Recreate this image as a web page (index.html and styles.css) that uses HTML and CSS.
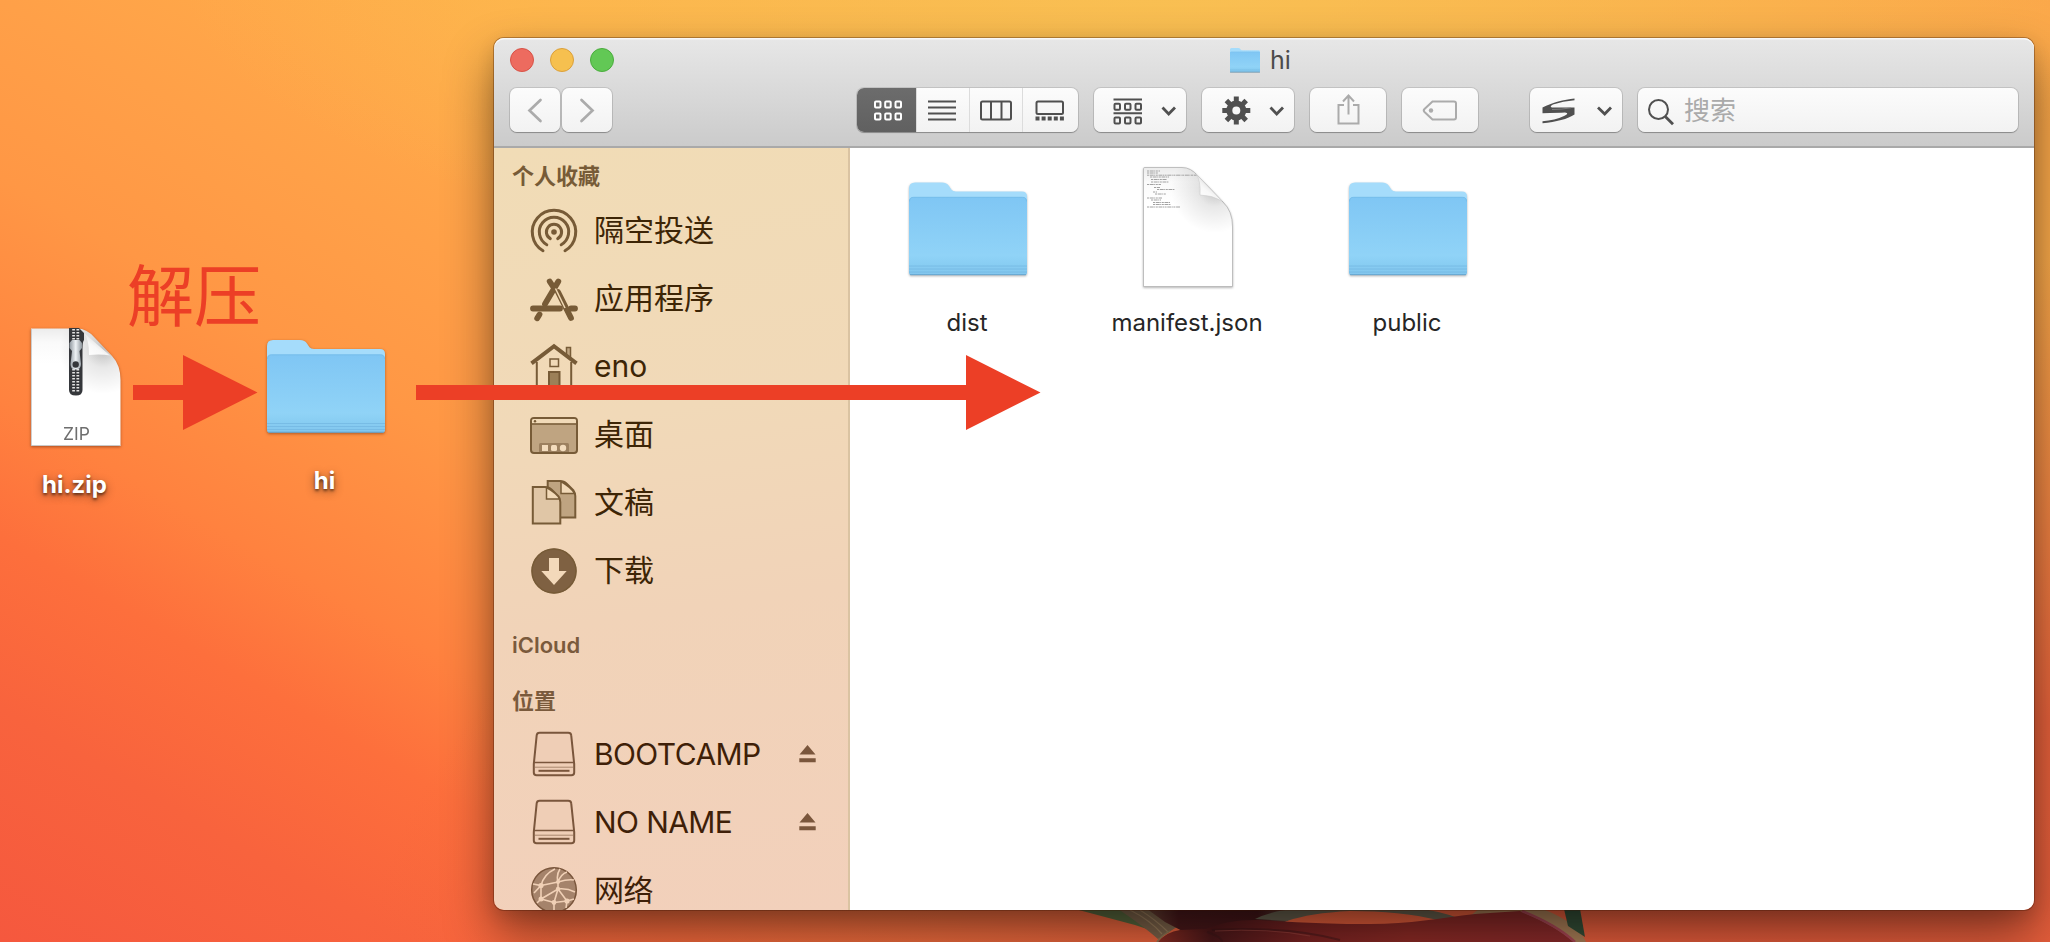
FILE: index.html
```html
<!DOCTYPE html>
<html lang="zh-CN">
<head>
<meta charset="utf-8">
<title>hi</title>
<link rel="stylesheet" href="styles.css">
</head>
<body>
<svg class="defs" width="0" height="0" aria-hidden="true">
  <defs>
    <linearGradient id="front" x1="0" y1="0" x2="0" y2="1">
      <stop offset="0" stop-color="#7fc6f4"/><stop offset=".75" stop-color="#90d3f7"/><stop offset=".87" stop-color="#88cdf2"/><stop offset="1" stop-color="#82c6ee"/>
    </linearGradient>
    <linearGradient id="paper" x1="0" y1="0" x2="0" y2="1">
      <stop offset="0" stop-color="#ececec"/><stop offset=".12" stop-color="#fafafa"/><stop offset=".3" stop-color="#fff"/>
    </linearGradient>
    <linearGradient id="curl" x1="0" y1="1" x2=".6" y2=".3">
      <stop offset="0" stop-color="#fff"/><stop offset=".6" stop-color="#f8f8f8"/><stop offset="1" stop-color="#dedede"/>
    </linearGradient>
    <radialGradient id="fold" gradientUnits="userSpaceOnUse" cx="72" cy="22" r="44">
      <stop offset="0" stop-color="#000" stop-opacity=".24"/><stop offset=".4" stop-color="#000" stop-opacity=".09"/><stop offset="1" stop-color="#000" stop-opacity="0"/>
    </radialGradient>
    <linearGradient id="pull" x1="0" y1="0" x2="1" y2="0">
      <stop offset="0" stop-color="#8e969d"/><stop offset=".5" stop-color="#eef2f5"/><stop offset="1" stop-color="#8e969d"/>
    </linearGradient>
    <linearGradient id="petal" x1="0" y1="0" x2="1" y2="0">
      <stop offset="0" stop-color="#8c2d23"/><stop offset=".13" stop-color="#4a1719"/><stop offset=".35" stop-color="#7a2322"/><stop offset=".6" stop-color="#8c2a25"/><stop offset="1" stop-color="#8a2a2b"/>
    </linearGradient>
    <linearGradient id="core" x1="0" y1="0" x2="1" y2="0">
      <stop offset="0" stop-color="#6b4436"/><stop offset=".2" stop-color="#4a191b"/><stop offset=".7" stop-color="#441618"/><stop offset="1" stop-color="#6b5245"/>
    </linearGradient>
    <symbol id="folder" viewBox="0 0 118 93">
      <path d="M0 6Q0 0 6 0H33Q38 0 40 3.500L42.500 7.200Q43.800 9 47 9H113Q118 9 118 14V60H0Z" fill="#a5dcfb"/>
      <path d="M0 19Q0 14.500 4.500 14.500H113.500Q118 14.500 118 19V90Q118 92.500 115.500 92.500H2.500Q0 92.500 0 90Z" fill="url(#front)"/>
      <path d="M.5 19Q.5 14.800 4.500 14.800H113.500Q117.500 14.800 117.500 19" fill="none" stroke="#74bbe9" stroke-width=".8"/>
      <path d="M0 83.500H118M0 86.500H118M0 89.500H118" stroke="#74b7e2" stroke-width=".8"/>
      <path d="M1 92.200H117" stroke="#65a4cd" stroke-width="1"/>
    </symbol>
    <symbol id="drive" viewBox="0 0 48 48">
      <path d="M9.500 2.700H38.300Q41 2.700 41.200 5.200L44.200 34V42.500Q44.200 45.300 41.400 45.300H6.600Q3.800 45.300 3.800 42.500V34L6.700 5.200Q7 2.700 9.500 2.700Z" class="tint-light outline"/>
      <path d="M4 32.600H44" class="line thin"/><path d="M5 37.200H43" class="line hair"/><path d="M8.500 40.800H39.500" class="line"/>
    </symbol>
    <symbol id="eject" viewBox="0 0 17 18"><path d="M8.500 0 16.500 9.500H.5ZM.3 13.300H16.700V17.300H.3Z" fill="currentColor"/></symbol>
  </defs>
</svg>

<main class="desktop">
  <svg class="flower" width="560" height="34" viewBox="1060 908 560 34">
    <path d="M1075 909H1140L1150 930 1135 925Z" fill="#59683e"/>
    <path d="M1118 909H1165L1180 925 1158 939Q1142 925 1118 909Z" fill="#7b6249"/>
    <path d="M1130 910Q1150 920 1162 934M1140 910Q1156 920 1168 932" stroke="#9a7d5c" stroke-width="1.200" fill="none"/>
    <path d="M1147 909H1305Q1295 914 1287 921L1260 932 1190 935 1165 922Z" fill="url(#core)"/>
    <path d="M1255 919Q1270 911 1300 908H1415Q1440 911 1458 918L1438 920Q1400 911 1350 911 1310 913 1287 921Z" fill="#675f4d"/>
    <path d="M1470 916 1480 908H1540Q1578 922 1586 942H1565Z" fill="#a87d56"/>
    <path d="M1158 942Q1166 932 1180 930L1206 929Q1228 919 1260 920 1320 924 1370 924C1410 924 1440 918 1475 914L1520 911Q1555 925 1574 942Z" fill="url(#petal)"/>
    <path d="M1207 932Q1222 937 1222 942M1212 930Q1290 926 1340 940" fill="none" stroke="#3b1517" stroke-width="2" opacity=".5"/>
    <path d="M1215 931Q1270 928 1310 936" fill="none" stroke="#9d4741" stroke-width="1" opacity=".6"/>
    <path d="M1522 911Q1557 925 1575 942" fill="none" stroke="#a84654" stroke-width="2.500"/>
    <path d="M1157 942Q1162 935 1170 931" fill="none" stroke="#8b7452" stroke-width="1.500"/>
    <path d="M1564 909H1580L1585 937 1568 926Z" fill="#344e37"/>
  </svg>

  <figure class="item item-zip">
    <svg width="90" height="119" viewBox="0 0 90 119">
      <path d="M0 .5H46Q56 .5 64 10L81 28Q89.500 37 89.500 52V118H0Z" fill="url(#paper)"/>
      <path d="M0 .5H46Q56 .5 64 10L81 28Q89.500 37 89.500 52V118H0Z" fill="url(#fold)"/>
      <path d="M0 117.500H89.500M.4 1V118" stroke="#bbb" stroke-width=".8"/>
      <path d="M53 5Q58 11 58 27 70 26 79 27.500Z" fill="url(#curl)"/>
      <path d="M38 0H48L53 5V12Q51.500 14 51.500 20V62Q51.500 67.500 45 67.500 38 67.500 38 62Z" fill="#35373b"/>
      <path d="M44.700 1V13M44.700 41V64" stroke="#e2e2e2" stroke-width="7" stroke-dasharray="1.500 1.500"/>
      <path d="M44.700 1V13M44.700 41V64" stroke="#35373b" stroke-width="1.500"/>
      <path d="M41 12H48.500L51 15V20L48.500 23 50 36Q50 41.500 44.500 41.500 39.500 41.500 39.500 36L41 23 38.500 20V15Z" fill="url(#pull)"/>
      <circle cx="44.700" cy="36.500" r="3.200" fill="#35373b"/>
      <text x="45.500" y="111.500" text-anchor="middle" class="ext">ZIP</text>
    </svg>
    <figcaption>hi.zip</figcaption>
  </figure>

  <figure class="item item-hi">
    <svg width="118" height="93"><use href="#folder"/></svg>
    <figcaption>hi</figcaption>
  </figure>

  <section class="window">
    <header class="titlebar">
      <div class="title-row">
        <div class="lights"><i class="close"></i><i class="min"></i><i class="max"></i></div>
        <div class="title"><svg width="30" height="24" viewBox="0 0 118 93" preserveAspectRatio="none"><use href="#folder"/></svg><span>hi</span></div>
      </div>
      <div class="tools">
        <div class="nav">
          <span class="btn"><svg width="50" height="45"><path d="M30.500 12 19.500 22.500 30.500 33" class="dim chev"/></svg></span>
          <span class="btn"><svg width="50" height="45"><path d="M19.500 12 30.500 22.500 19.500 33" class="dim chev"/></svg></span>
        </div>
        <div class="btn views">
          <span class="view on"><svg width="59" height="45"><g fill="none" stroke="#fff" stroke-width="2"><rect x="18" y="13.500" width="5.500" height="6" rx="1"/><rect x="28.200" y="13.500" width="5.500" height="6" rx="1"/><rect x="38.500" y="13.500" width="5.500" height="6" rx="1"/><rect x="18" y="25.500" width="5.500" height="6" rx="1"/><rect x="28.200" y="25.500" width="5.500" height="6" rx="1"/><rect x="38.500" y="25.500" width="5.500" height="6" rx="1"/></g></svg></span>
          <span class="view"><svg width="53" height="45"><path d="M12 13.500H40M12 19.500H40M12 25.500H40M12 31.500H40" class="ink"/></svg></span>
          <span class="view"><svg width="53" height="45"><rect x="12" y="13.500" width="30" height="18" rx="1.500" class="ink"/><path d="M22 13.500V31.500M32.500 13.500V31.500" class="ink"/></svg></span>
          <span class="view"><svg width="54" height="45"><rect x="14.500" y="13.500" width="26.500" height="12.500" rx="1.500" class="ink"/><path d="M13.500 30.500H42" class="ink dots"/></svg></span>
        </div>
        <span class="btn"><svg width="92" height="45"><path d="M19.500 11.500H48M19.500 25.300H48" class="ink"/><g class="ink"><rect x="20.500" y="15.800" width="5.500" height="6" rx="1"/><rect x="31" y="15.800" width="5.500" height="6" rx="1"/><rect x="41.500" y="15.800" width="5.500" height="6" rx="1"/><rect x="20.500" y="29.500" width="5.500" height="6" rx="1"/><rect x="31" y="29.500" width="5.500" height="6" rx="1"/><rect x="41.500" y="29.500" width="5.500" height="6" rx="1"/></g><path d="M68.500 19.500 74.700 26 81 19.500" class="ink drop"/></svg></span>
        <span class="btn"><svg width="92" height="45"><circle cx="34.300" cy="22.500" r="7" fill="none" stroke="#505050" stroke-width="6"/><path d="M34.300 8.500V14.500M34.300 30.500V36.500M20.300 22.500H26M42.500 22.500H48.300M24.400 12.600 29 17.200M44.200 12.600 39.600 17.200M24.400 32.400 29 27.800M44.200 32.400 39.600 27.800" stroke="#505050" stroke-width="5"/><path d="M68.500 19.500 74.700 26 81 19.500" class="ink drop"/></svg></span>
        <span class="btn"><svg width="76" height="45"><path d="M34 17H28.500V35.500H48.500V17H43M38.500 26.500V8M33 13.500 38.500 7.500 44 13.500" class="dim"/></svg></span>
        <span class="btn"><svg width="76" height="45"><path d="M30.500 13.500H52Q54 13.500 54 15.500V29.500Q54 31.500 52 31.500H30.500L22.500 24Q21 22.500 22.500 21Z" class="dim"/><circle cx="29" cy="22.500" r="2.200" fill="#ababab"/></svg></span>
        <span class="btn sogou"><svg width="92" height="45"><path d="M44.500 10.500C34 11.500 22 14.500 12.500 19.500V25.300Q28 24.800 35 24.500 40 25 34 28 25 32.300 12.500 33.200V35.200C26 34 38 31 44.500 26.500V19.500H22Q19 18.500 23 16.500 33 13 44.500 12.200Z" fill="#505050"/><path d="M22 21.500Q32 21.500 41 19.800" stroke="#888" stroke-width=".8" fill="none"/><path d="M68 19.500 74.700 26 81 19.500" class="ink drop"/></svg></span>
        <div class="btn search"><svg width="46" height="45"><circle cx="20.500" cy="21.500" r="9.500" class="ink"/><path d="M27.500 28.700 35 36.200" class="ink drop"/></svg><span>搜索</span></div>
      </div>
    </header>

    <div class="body">
      <nav class="sidebar">
        <h2 class="head-fav">个人收藏</h2>
        <ul>
          <li><svg width="48" height="48"><circle cx="24" cy="24" r="2.800" fill="currentColor"/><path d="M20.300 30.600A7.600 7.600 0 1 1 27.700 30.600M16.800 36.700A14.700 14.700 0 1 1 31.200 36.700M13 42.700A21.700 21.700 0 1 1 35 42.700" class="line arcs"/></svg><span>隔空投送</span></li>
          <li><svg width="48" height="48"><path d="M28.300 5.500 15 28M9.500 38.500 7.200 42.200M19.700 5.500 23 10.500M28 16 41 42" class="line limb"/><path d="M3 32.500H30M41 32.500H45" class="line limb"/><path d="M25.500 12.500 35 32" stroke="#f1dab6" stroke-width="1.500"/></svg><span>应用程序</span></li>
          <li><svg width="48" height="48"><path d="M36.500 12V3.500H40.500V15" class="line tint thin"/><path d="M6.800 18V45H41.200V18" class="line"/><path d="M1.500 19.300 24 2.200 46.500 19.300" class="line roof"/><rect x="20" y="15" width="8.500" height="7.500" class="line thin"/><rect x="19" y="28" width="10.500" height="17" class="line tint-dark"/></svg><span>eno</span></li>
          <li><svg width="48" height="48"><rect x="1" y="6" width="46" height="35" rx="3" class="line tint"/><path d="M2 11.500V8.500Q2 7 3.500 7H44.500Q46 7 46 8.500V11.500Z" fill="#f1dab8"/><path d="M1 12H47" class="line thin"/><circle cx="5" cy="9.300" r="1.200" fill="currentColor"/><path d="M9 40V32.500Q9 31 10.500 31H37.500Q39 31 39 32.500V40Z" fill="#9c805f"/><rect x="12" y="33" width="6" height="6" fill="#f3dcbd"/><rect x="21" y="33" width="6" height="6" rx="1.500" fill="#f3dcbd"/><circle cx="33" cy="36" r="3.200" fill="#f3dcbd"/></svg><span>桌面</span></li>
          <li><svg width="48" height="48"><path d="M17.700 1H30Q34 1 37 4L43.500 10.500Q45.300 13 45.300 16V37.500H17.700Z" class="line tint"/><path d="M31 1.500V13.500H44.500Q42 8 31 1.500Z" class="line thin sheet-fold"/><path d="M2.800 7H15Q19 7 22 10L28.500 16.500Q30.300 18.500 30.300 22V43.500H2.800Z" class="line sheet"/><path d="M16.500 7.500V19H29.500Q28 14 16.500 7.500Z" class="line thin sheet-fold"/></svg><span>文稿</span></li>
          <li><svg width="48" height="48"><circle cx="24" cy="23" r="22.500" fill="#7f6142"/><circle cx="24" cy="23" r="22" class="line thin"/><path d="M19 10H29V23H36.700L24 37 11.300 23H19Z" fill="#f3d9ba"/></svg><span>下载</span></li>
        </ul>
        <h2 class="head-cloud">iCloud</h2>
        <h2 class="head-loc">位置</h2>
        <ul class="places">
          <li><svg width="48" height="48"><use href="#drive"/></svg><span>BOOTCAMP</span><svg class="eject" width="17" height="18"><use href="#eject"/></svg></li>
          <li><svg width="48" height="48"><use href="#drive"/></svg><span>NO NAME</span><svg class="eject" width="17" height="18"><use href="#eject"/></svg></li>
          <li><svg width="48" height="48"><circle cx="24" cy="24" r="22.500" fill="#a5836b"/><circle cx="24" cy="24" r="22.300" class="line thin"/><g fill="none" stroke="#f0d0b6" stroke-width="1.600"><path d="M3 18 11 19.500Q14 8 25 3M11 19.500 28 16Q38 13 44 14M28 16Q26 9 30 3M28 16Q31 8 37 6M4 27 11 19.500V33L28 23 37 35M28 23V16M28 23Q37 22 45 26M11 33 24 36.500 37 35 44 33M11 33 7 37M24 36.500V46M24 36.500 28 23M37 35 36 42"/></g><g fill="#f0d0b6"><circle cx="11" cy="19.500" r="2.600"/><circle cx="28" cy="16" r="2"/><circle cx="28" cy="23" r="2.200"/><circle cx="11" cy="33" r="2.500"/><circle cx="24" cy="36.500" r="2.400"/><circle cx="37" cy="35" r="2.600"/></g></svg><span>网络</span></li>
        </ul>
      </nav>

      <div class="files">
        <figure><svg width="118" height="94"><use href="#folder"/></svg><figcaption>dist</figcaption></figure>
        <figure>
          <svg class="doc" width="90" height="120" viewBox="0 0 90 120">
            <path d="M.5 1.500Q.5 .5 2 .5H39Q48 .5 55 9L80 35Q89.500 44 89.500 60V119.500H.5Z" fill="url(#paper)" stroke="#b4b4b4" stroke-width=".8"/>
            <path d="M1 1H39Q48 1 55 9L80 35Q89 44 89 60V90H1Z" fill="url(#fold)"/>
            <g fill="none" stroke="#a2a2a2" stroke-width="1" stroke-dasharray="2 .7 4 .5 1 .6"><path d="M4 4H17M4 6H15M4 8.200H54M7 10H26M8 12.500H24M8 15H26M4 17.500H18M11 20.500H17M14 22.500H32M10 25H14M12 27H23M4 31H19M8 33H18M10 35.500H27M10 37.500H28M4 40H37"/></g>
            <path d="M53 7Q58 14 57 28 69 28 79 34Z" fill="url(#curl)" stroke="#ccc" stroke-width=".6"/>
          </svg>
          <figcaption>manifest.json</figcaption>
        </figure>
        <figure><svg width="118" height="94"><use href="#folder"/></svg><figcaption>public</figcaption></figure>
      </div>
    </div>
  </section>

  <p class="note">解压</p>
  <svg class="arrow arrow-short" width="125" height="75"><path d="M0 30H50V0L124.500 37.500 50 75V45H0Z" fill="#ec3f26"/></svg>
  <svg class="arrow arrow-long" width="625" height="75"><path d="M0 30H550V0L624.500 37.500 550 75V45H0Z" fill="#ec3f26"/></svg>
</main>
</body>
</html>
```

FILE: styles.css
```css
* { box-sizing: border-box; }
body { margin: 0; font-family: Inter, "Noto Sans CJK SC", sans-serif; overflow: hidden; }
h2, p, ul, figure { margin: 0; padding: 0; }
svg { display: block; flex: none; overflow: visible; }
.defs { position: absolute; }

.desktop {
  position: relative;
  width: 2050px;
  height: 942px;
  overflow: hidden;
  background:
    radial-gradient(ellipse 1000px 300px at 1180px -20px, rgba(248, 196, 84, .8), rgba(248, 190, 80, 0)),
    radial-gradient(ellipse 1400px 800px at 1750px 1040px, #e2583a 0%, #e8623c 45%, rgba(238, 104, 64, 0) 100%),
    linear-gradient(210deg, #fba549 0%, #fbb04c 25%, #ffb04a 42%, #ffa048 55.700%, #ff9745 64%, #ff823f 74.500%, #fd6f3c 81%, #f8633d 89%, #f5583e 100%);
}
.flower { position: absolute; left: 1060px; top: 908px; }

.item { position: absolute; display: flex; flex-direction: column; align-items: center; }
.item svg { filter: drop-shadow(0 1px 1.5px rgba(90, 30, 0, .5)); }
.item figcaption {
  color: #fff; font-size: 24px; line-height: 30px; font-weight: 700;
  text-shadow: 0 2px 3px rgba(0, 0, 0, .55), 0 3px 10px rgba(0, 0, 0, .45);
}
.item-zip { left: 31px; top: 328px; width: 90px; gap: 23px; }
.item-zip figcaption { margin-left: -3px; }
.item-hi { left: 267px; top: 340px; width: 118px; gap: 33px; }
.item-hi figcaption { margin-left: -3px; }
.ext { font-size: 17.500px; fill: #6e6e6e; }

.window {
  position: absolute; left: 494px; top: 38px; width: 1540px; height: 872px;
  display: flex; flex-direction: column;
  border-radius: 10px;
  box-shadow: 0 0 0 1px rgba(60, 20, 0, .32), 0 24px 50px rgba(0, 0, 0, .45), 0 6px 18px rgba(0, 0, 0, .12);
}
.titlebar {
  flex: none; height: 110px;
  border-radius: 10px 10px 0 0;
  background: linear-gradient(#e7e7e7, #cbcbcb);
  box-shadow: inset 0 1.500px 0 #f8f8f8;
  border-bottom: 2px solid #a9a9a9;
}
.title-row { display: grid; grid-template-columns: 1fr auto 1fr; align-items: center; height: 50px; padding: 0 23px 0 16px; }
.lights { display: flex; gap: 16px; padding-bottom: 6px; }
.lights i { width: 24px; height: 24px; border-radius: 50%; border: 1px solid; }
.lights .close { background: #ed6b5f; border-color: #d85247; }
.lights .min { background: #f6c04f; border-color: #dba03a; }
.lights .max { background: #62c855; border-color: #4aad3d; }
.title { display: flex; align-items: center; gap: 10px; color: #4b4b4b; font-size: 25px; line-height: 30px; padding-bottom: 6px; }
.title svg { filter: drop-shadow(0 1px 0 #8aa8bb); }

.tools { display: flex; height: 44px; padding-left: 16px; }
.btn {
  display: block; height: 44px; margin-right: 16px; border-radius: 7px;
  background: linear-gradient(#fcfcfc, #f2f2f2);
  box-shadow: 0 0 0 1px rgba(0, 0, 0, .11), 0 1px 1px 0 rgba(0, 0, 0, .25);
}
.nav { display: flex; gap: 2px; width: 102px; margin-right: 245px; }
.nav .btn { margin: 0; }
.views { display: flex; overflow: hidden; width: 221px; }
.view + .view { border-left: 1px solid #dcdcdc; }
.view { height: 45px; }
.view svg { overflow: hidden; }
.view + .view svg { margin-left: -1px; }
.view.on { background: linear-gradient(#6c6c6c, #606060); width: 59px; }
.sogou { margin-left: 36px; }
.search { display: flex; align-items: center; width: 380px; margin: 0; font-size: 26px; color: #aaa; }
.search span { line-height: 36px; padding-top: 2px; }
.ink { fill: none; stroke: #505050; stroke-width: 2; }
.dots { stroke-width: 4; stroke-dasharray: 4 2.100; }
.drop { stroke-width: 2.800; }
.dim { fill: none; stroke: #ababab; stroke-width: 2; }
.chev { stroke-width: 2.700; stroke-linecap: round; }

.body { flex: 1; display: flex; min-height: 0; }
.sidebar {
  flex: none; width: 356px; overflow: hidden;
  border-right: 2px solid #dac3a2; border-radius: 0 0 0 10px;
  background: linear-gradient(172deg, #f1dcb6 0%, #f1d9b8 35%, #f1d3b8 60%, #f2d0bb 100%);
  color: #775b37;
}
.sidebar h2 { padding-left: 18px; font-size: 22px; line-height: 32px; font-weight: 600; }
.head-fav { height: 50px; padding-top: 12px; }
.head-cloud { height: 68px; padding-top: 23px; color: #7a5a3c; }
.head-loc { height: 46px; padding-top: 11px; color: #7a5a3c; }
.sidebar ul { list-style: none; }
.sidebar li { display: flex; align-items: center; height: 68px; padding: 0 32px 0 36px; }
.sidebar li span { padding-left: 16px; font-size: 30px; line-height: 40px; color: #3d2506; margin-top: -4px; }
.places { color: #7a563c; }
.sidebar .places li span { margin-top: -1px; color: #3f1f08; letter-spacing: -.6px; }
.eject { margin-left: auto; }
.line { fill: none; stroke: currentColor; stroke-width: 2; }
.outline { stroke: currentColor; stroke-width: 2; }
.thin { stroke-width: 1.500; }
.hair { stroke-width: 1; opacity: .6; }
.arcs { stroke-width: 3; stroke-linecap: round; }
.limb { stroke-width: 5.800; stroke-linecap: round; }
.roof { stroke-width: 4; }
.tint { fill: #bfa481; }
.tint-dark { fill: #9c8058; }
.tint-light { fill: #efceb6; }
.sheet { fill: #e0c6a6; }
.sheet-fold { fill: #f1d9b8; }

.files {
  flex: 1; display: flex; align-items: flex-start; padding: 19px 0 0 8px;
  background: #fff; border-radius: 0 0 10px 0;
}
.files figure { width: 220px; display: flex; flex-direction: column; align-items: center; justify-content: space-between; height: 171px; padding-top: 15px; }
.files figure:nth-child(2) { padding-top: 0; }
.files svg { filter: drop-shadow(0 1px 1px rgba(0, 0, 0, .3)); }
.files figcaption { font-size: 24px; line-height: 30px; color: #262626; margin-left: -2px; }

.note { position: absolute; left: 127px; top: 249px; font-size: 67px; line-height: 96px; color: #ec3f26; }
.arrow { position: absolute; top: 355px; }
.arrow-short { left: 133px; }
.arrow-long { left: 416px; }
```
